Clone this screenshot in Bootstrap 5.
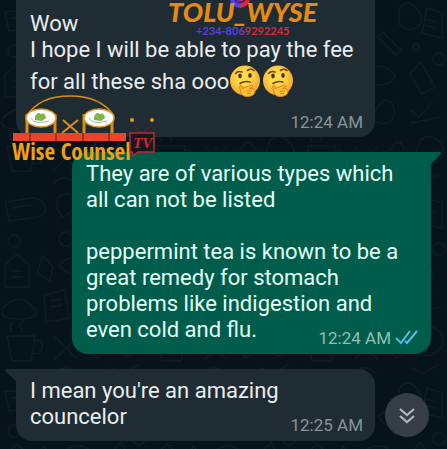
<!DOCTYPE html>
<html lang="en">
<head>
<meta charset="utf-8">
<meta name="viewport" content="width=device-width, initial-scale=1">
<title>Chat</title>
<link href="https://cdn.jsdelivr.net/npm/bootstrap@5.3.0/dist/css/bootstrap.min.css" rel="stylesheet">
<style>
body{background:#07131a;font-family:Roboto,"Noto Sans",sans-serif;font-size:22px;line-height:26px;color:#e9edef}
.chat{min-height:100vh;overflow:hidden}
.wallpaper{inset:0;width:100%;height:100%;z-index:-1}
.bubble{border-radius:16px;padding:9px 12px 3px 14px}
.bubble p{margin:0}
.incoming{background:#202c33;margin-left:16px;margin-right:72px}
.outgoing{background:#005d4b;color:#e4fff6;margin-left:72px;margin-right:16px;border-top-right-radius:0}
.opening{border-top-left-radius:0;border-top-right-radius:0;padding-top:11px;padding-bottom:2px}
.reply{border-top-left-radius:0}
.tail{top:0;width:12px;height:12px}
.tail-left{left:-11px}
.tail-right{right:-10px}
.emoji-line{line-height:38px}
.emoji{width:32px;height:32px;margin-right:1px;vertical-align:-8px}
.stamp{font-size:17px;line-height:26px;color:#87949b}
.outgoing .stamp{color:#8fc0b2}
.gap-bubbles{gap:15px}
.mark-phone{top:0;left:168px;width:160px;height:40px}
.mark-logo{top:90px;left:10px;width:150px;height:76px}
.scroll-btn{right:18px;bottom:12px;width:44px;height:44px;background:#343e44;color:#aeb6ba;border:0}
</style>
<script src="https://cdn.jsdelivr.net/npm/bootstrap@5.3.0/dist/js/bootstrap.bundle.min.js"></script>
</head>
<body>
<svg width="0" height="0" class="position-absolute" aria-hidden="true">
<defs>
<radialGradient id="face" cx=".45" cy=".4" r=".6"><stop offset=".4" stop-color="#ffd94b"/><stop offset="1" stop-color="#f5a52c"/></radialGradient>
<symbol id="thinking" viewBox="0 0 32 32">
<circle cx="16" cy="15.500" r="15" fill="url(#face)"/>
<ellipse cx="11" cy="11" rx="1.800" ry="2.400" fill="#55351a"/><ellipse cx="21" cy="10.500" rx="1.800" ry="2.400" fill="#55351a"/>
<path d="M6.500 8.500Q9 5.500 13 7M18.500 5.500Q22 3 25 5.500M11 18.500Q16 15.500 21 17" fill="none" stroke="#6b4118" stroke-width="1.600" stroke-linecap="round"/>
<path d="M13 23.500L22.500 20Q24.500 20 23.500 22L20.500 23.500Q26 23 26 27Q25 31 19 31.500Q13 32 12 27L10.500 22Q11 19.500 13 21Z" fill="#ffc03a" stroke="#df801c"/>
<path d="M18 26h5M18 28.500h4" stroke="#df801c"/>
</symbol>
<pattern id="doodles" width="150" height="190" patternUnits="userSpaceOnUse">
<g fill="none" stroke="#0e1c23" stroke-width="1.300" stroke-linecap="round" stroke-linejoin="round">
<path d="M5 12l27-4q10 0 13 8t-7 11L9 31ZM12 18l19-3M58 8q10-10 15 1t-10 18q-9-8-5-19M83 32l18 18-5 5-18-18ZM99 9q9-12 18 0t0 18q-9 6-18-3ZM127 8l15 5v25l-20-5ZM126 19l10 3M125 25l10 3"/>
<circle cx="66" cy="49" r="7"/><circle cx="14" cy="51" r="6"/><circle cx="116" cy="47" r="3"/><circle cx="139" cy="59" r="6"/>
<path d="M5 75l12-11 12 11v22H5ZM12 81h10M12 87h10M43 66l10 11-3 14-13-8ZM59 75q20-18 36 0-2 8-10 9-14 5-26-9M110 74l11-12 14 25-13 7Z"/>
<path d="M2 119q15-17 29-4t-9 14-20-10M44 105l21-5 4 28-23 4ZM50 111l11-2M51 117l11-2M84 100q11 0 10 13t-15 10 5-23M110 110l9 7 13-14M111 123l29-6"/>
<path d="M7 146h28l-4 25H12ZM35 150q9 0 7 8t-10 5M12 141q-5-5 1-9M22 140q-5-5 1-9M55 147l22 22M77 147l-22 22M92 148q6-12 12 0 12 7 1 12-9 14-14 1-12-5 1-13M120 140q12-8 21 4t-12 22q-19-2-9-26M54 183q10-10 22 0M111 178l12 5 15-8"/>
</g></pattern>
</defs>
</svg>
<main class="chat position-relative d-flex flex-column gap-bubbles">
<svg class="wallpaper position-absolute" aria-hidden="true"><rect width="100%" height="100%" fill="url(#doodles)"/></svg>

<article class="bubble opening incoming">
<p>Wow<br>I hope I will be able to pay the fee</p>
<p class="emoji-line text-nowrap">for all these sha ooo<svg class="emoji" role="img" aria-label="Thinking face"><use href="#thinking"/></svg><svg class="emoji" role="img" aria-label="Thinking face"><use href="#thinking"/></svg></p>
<div class="stamp text-end mt-2"><time>12:24 AM</time></div>
</article>

<article class="bubble outgoing position-relative">
<svg class="tail tail-right position-absolute" viewBox="0 0 12 12" aria-hidden="true"><path d="M0 0h11q2 1 0 3L2 12H0Z" fill="#005d4b"/></svg>
<p>They are of various types which<br>all can not be listed<br><br>peppermint tea is known to be a<br>great remedy for stomach<br>problems like indigestion and</p>
<div class="d-flex justify-content-between align-items-start"><p>even cold and flu.</p>
<div class="stamp d-flex align-items-center gap-1 mt-2"><time>12:24 AM</time><svg width="24" height="18" viewBox="0 0 24 18" fill="none" stroke="#53bdeb" stroke-width="2" role="img" aria-label="Read"><path d="M1 9l5 5L15 2M10 12l2 2L22 2"/></svg></div></div>
</article>

<article class="bubble reply incoming position-relative">
<svg class="tail tail-left position-absolute" viewBox="0 0 12 12" aria-hidden="true"><path d="M12 0H1q-2 1 0 3l10 9h1Z" fill="#202c33"/></svg>
<p>I mean you're an amazing</p>
<div class="d-flex justify-content-between align-items-start"><p>councelor</p><time class="stamp mt-2">12:25 AM</time></div>
</article>

<svg class="mark-phone position-absolute" viewBox="0 0 160 40" role="img" aria-label="Tolu Wyse, phone">
<defs><linearGradient id="dial"><stop offset=".45" stop-color="#5140e8"/><stop offset=".6" stop-color="#df2638"/></linearGradient></defs>
<circle cx="72" cy="-2" r="10" fill="url(#dial)"/><path d="M67 0q5 5 10 0M67-2h10" fill="none" stroke="#501d62" stroke-width="2"/>
<text x="0" y="22" font-family="Lato" font-size="27" font-weight="900" font-style="italic" fill="#e58a16">TOLU_WYSE</text>
<text x="28" y="35" font-family="Lato" font-size="11" font-weight="700" fill="url(#dial)">+234-8069292245</text>
</svg>

<svg class="mark-logo position-absolute" viewBox="0 0 150 76" role="img" aria-label="Wise Counsel TV">
<g fill="none" stroke="#d98e19" stroke-width="2"><path d="M17 26Q29 6 60 6T104 26" stroke-width="1.500"/><path d="M17 24v20M45 24v20M74 24v20M102 24v20" stroke-width="3"/><path d="M53 30l15 13M68 30l-16 13"/></g>
<g fill="#fff" stroke="#df971f" stroke-width="1.500"><ellipse cx="31" cy="28" rx="15" ry="9"/><ellipse cx="89" cy="28" rx="15" ry="9"/></g>
<g fill="none" stroke="#9bb9b4"><path d="M21 28q3 7 18 3M79 28q3 7 18 3"/></g>
<g fill="#82b34c"><path d="M25 27q2-6 6-3 4-2 5 4l-4 3-7-1ZM84 27q2-6 6-3 4-2 5 4l-4 3-7-1Z"/></g>
<path d="M3 43h113v8H3Z" fill="#ef4329"/><path d="M20 43v8M46 43v8M73 43v8M99 43v8" stroke="#7c2f22" stroke-width="1.500"/>
<text x="2" y="70" font-family="Liberation Sans Narrow, Open Sans Condensed, sans-serif" font-size="23" font-weight="700" fill="#f0a018">Wise Counsel</text>
<circle cx="122" cy="30" r="2" fill="#ec9a18"/><circle cx="142" cy="30" r="2" fill="#ec9a18"/>
<path d="M124 36l7 6M142 35l-9 7" stroke="#67242a" fill="none"/><path d="M120 43h24v19h-16l-5 4-1-4h-2Z" fill="#17191e" stroke="#b82e35" stroke-width="1.500"/>
<text x="123" y="58" font-family="Liberation Serif" font-size="15" font-style="italic" font-weight="700" fill="#d32636">TV</text>
</svg>

<button type="button" class="scroll-btn position-absolute rounded-circle d-flex align-items-center justify-content-center p-0" aria-label="Scroll to latest"><svg width="20" height="20" viewBox="0 0 20 20" fill="none" stroke="currentColor" stroke-width="2.200"><path d="M3 4l7 6 7-6M3 11l7 6 7-6"/></svg></button>
</main>
</body>
</html>
